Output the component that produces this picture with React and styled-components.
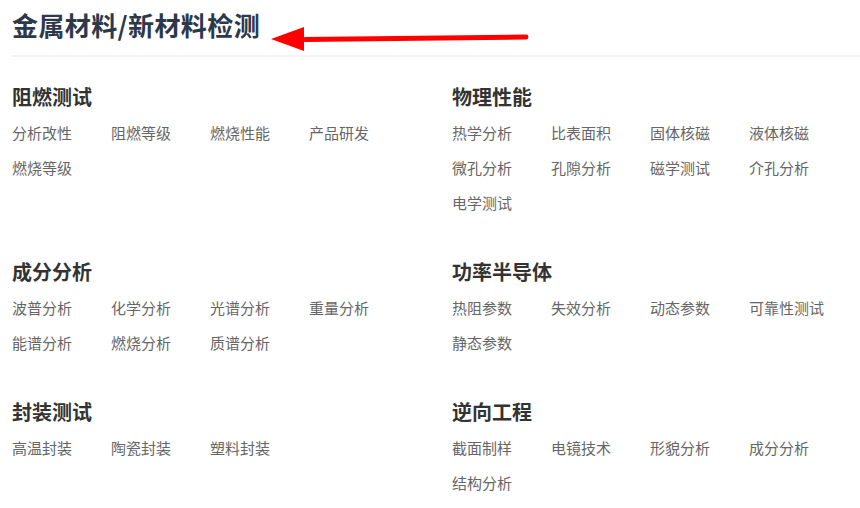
import React from 'react';
import styled, { createGlobalStyle } from 'styled-components';

const GlobalStyle = createGlobalStyle`
  html, body {
    margin: 0;
    padding: 0;
    background: #fff;
    font-family: "Noto Sans CJK SC", "Noto Sans", sans-serif;
  }
`;

const sections = [
  { title: '阻燃测试', items: ['分析改性', '阻燃等级', '燃烧性能', '产品研发', '燃烧等级'] },
  { title: '物理性能', items: ['热学分析', '比表面积', '固体核磁', '液体核磁', '微孔分析', '孔隙分析', '磁学测试', '介孔分析', '电学测试'] },
  { title: '成分分析', items: ['波普分析', '化学分析', '光谱分析', '重量分析', '能谱分析', '燃烧分析', '质谱分析'] },
  { title: '功率半导体', items: ['热阻参数', '失效分析', '动态参数', '可靠性测试', '静态参数'] },
  { title: '封装测试', items: ['高温封装', '陶瓷封装', '塑料封装'] },
  { title: '逆向工程', items: ['截面制样', '电镜技术', '形貌分析', '成分分析', '结构分析'] },
];

function App() {
  return (
    <>
      <GlobalStyle />
      <Page>
        <Header>
          <Title>金属材料/新材料检测</Title>
          <Arrow width="270" height="30" viewBox="0 0 270 30">
            <path d="M34 14.5 L255 12" stroke="#ff0000" strokeWidth="5" strokeLinecap="round" fill="none" />
            <polygon points="0,14 33,2 33,26" fill="#ff0000" />
          </Arrow>
        </Header>
        <Divider />
        <SectionGrid>
          {sections.map(s => (
            <Section key={s.title}>
              <SectionTitle>{s.title}</SectionTitle>
              <ItemGrid>
                {s.items.map((it, i) => (
                  <Item key={i}>{it}</Item>
                ))}
              </ItemGrid>
            </Section>
          ))}
        </SectionGrid>
      </Page>
    </>
  );
}

const Page = styled.div`
  width: 860px;
  padding: 0 0 0 12px;
  box-sizing: border-box;
`;

const Header = styled.div`
  position: relative;
  padding-top: 7px;
  height: 47px;
`;

const Title = styled.h1`
  margin: 0;
  font-size: 26px;
  line-height: 36px;
  font-weight: 700;
  color: #2d394b;
  letter-spacing: 0.4px;
`;

const Arrow = styled.svg`
  position: absolute;
  left: 259px;
  top: 25px;
`;

const Divider = styled.div`
  height: 2px;
  background: #f4f4f4;
  margin: 1px 0 0 -1px;
`;

const SectionGrid = styled.div`
  display: grid;
  grid-template-columns: 440px 408px;
  row-gap: 38px;
  margin-top: 26px;
`;

const Section = styled.div`
  display: flex;
  flex-direction: column;
`;

const SectionTitle = styled.h2`
  margin: 0 0 4px;
  font-size: 20px;
  line-height: 28px;
  font-weight: 700;
  color: #333;
`;

const ItemGrid = styled.div`
  display: grid;
  grid-template-columns: repeat(4, 99px);
`;

const Item = styled.span`
  font-size: 15px;
  line-height: 35px;
  color: #666;
  white-space: nowrap;
`;

export default App;
